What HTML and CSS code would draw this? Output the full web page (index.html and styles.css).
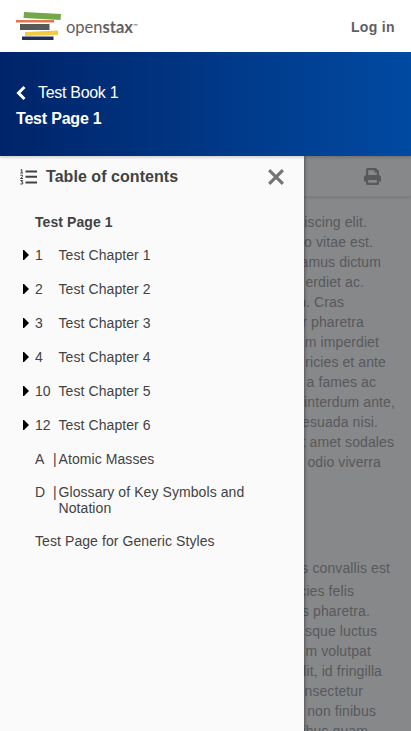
FILE: index.html
```
<!DOCTYPE html>
<html lang="en">
<head>
<meta charset="utf-8">
<title>Test Page 1</title>
<link rel="stylesheet" href="styles.css">
</head>
<body>
<header class="nav">
  <div class="logo">
    <svg width="46" height="29" viewBox="0 0 46 29" aria-hidden="true">
      <path fill="#73a84a" d="M8 0 45 2 44.500 8 7.500 6z"/>
      <path fill="#e27450" d="M0 8H38V10.600H0z"/>
      <path fill="#555a59" d="M4 12H33.500V18H4z"/>
      <path fill="#f2cb43" d="M9 20 42 18.500V23L9 24z"/>
      <path fill="#242c58" d="M6 24.500H37.500V28H6z"/>
    </svg>
    <span class="wordmark">open<b>stax</b><small>™</small></span>
  </div>
  <a class="login">Log in</a>
</header>
<section class="bookbar">
  <a class="book"><svg width="10" height="16" viewBox="0 0 10 16"><path d="M8.500 2 2.500 8 8.500 14" fill="none" stroke="#fff" stroke-width="3"/></svg><span>Test Book 1</span></a>
  <h1>Test Page 1</h1>
</section>
<main class="stage">
  <aside class="drawer">
    <div class="drawer-head">
      <svg class="list" width="18" height="16" viewBox="0 0 18 16"><path d="M5.500 2.500H17M5.500 7.800H17M5.500 13.500H17" stroke="#424242" stroke-width="2"/><path d="M.5 1.200 1.800.5V4M.3 4H3M.4 6.200H2.500V7.500L.5 9.500H3M.4 11.500H2.700L1.500 13H2.700V15H.3" fill="none" stroke="#424242"/></svg>
      <h2>Table of contents</h2>
      <svg class="close" width="16" height="16" viewBox="0 0 16 16"><path d="M2.300 2.300 13.700 13.700M13.700 2.300 2.300 13.700" stroke="#757575" stroke-width="3.200" stroke-linecap="square"/></svg>
    </div>
    <ul class="toc">
      <li class="current">Test Page 1</li>
      <li class="chapter"><i></i><span class="num">1</span><span>Test Chapter 1</span></li>
      <li class="chapter"><i></i><span class="num">2</span><span>Test Chapter 2</span></li>
      <li class="chapter"><i></i><span class="num">3</span><span>Test Chapter 3</span></li>
      <li class="chapter"><i></i><span class="num">4</span><span>Test Chapter 4</span></li>
      <li class="chapter"><i></i><span class="num">10</span><span>Test Chapter 5</span></li>
      <li class="chapter"><i></i><span class="num">12</span><span>Test Chapter 6</span></li>
      <li class="appendix"><span class="num">A</span><span class="bar">|</span><span>Atomic Masses</span></li>
      <li class="appendix"><span class="num">D</span><span class="bar">|</span><span>Glossary of Key Symbols and Notation</span></li>
      <li>Test Page for Generic Styles</li>
    </ul>
  </aside>
  <div class="content">
    <div class="toolbar">
      <svg width="17" height="17" viewBox="0 0 17 17"><path fill="#58595b" fill-rule="evenodd" d="M2 1.500Q2 0 3.500 0H12L15 3V7Q17 7.300 17 9V13.500H15V15.500Q15 17 13.500 17H3.500Q2 17 2 15.500V13.500H0V9Q0 7.300 2 7zM4.200 2.200V7H12.800V4.500H10.500V2.200zM4.200 12V14.800H12.800V12z"/></svg>
    </div>
    <div class="prose first">
      <p>iscing elit.</p><p>o vitae est.</p><p>amus dictum</p><p>erdiet ac.</p><p>n. Cras</p><p>r pharetra</p><p>m imperdiet</p><p>ricies et ante</p><p>a fames ac</p><p>interdum ante,</p><p>esuada nisi.</p><p>t amet sodales</p><p>odio viverra</p>
    </div>
    <div class="prose second">
      <p>s convallis est</p><p>cies felis</p><p>s pharetra.</p><p>sque luctus</p><p>m volutpat</p><p>lit, id fringilla</p><p>nsectetur</p><p>non finibus</p><p>ibus quam</p>
    </div>
  </div>
</main>
</body>
</html>
```
FILE: styles.css
```
* { box-sizing: border-box; }
body { margin: 0; height: 731px; overflow: hidden; display: flex; flex-direction: column; font-family: "Liberation Sans", Arial, sans-serif; color: #424242; background: #fff; }
h1, h2, p, ul { margin: 0; padding: 0; }
svg { display: block; flex: none; }
.nav { height: 52px; flex: none; display: flex; justify-content: space-between; padding: 12px 16px 0; }
.logo { display: flex; gap: 4px; }
.wordmark { font: 16.500px/27px Lato, sans-serif; color: #5f6062; }
.wordmark small { font-size: 6px; vertical-align: 5px; }
.login { font-size: 14px; font-weight: bold; line-height: 31px; letter-spacing: .35px; color: #5f6062; }
.bookbar { height: 104px; flex: none; padding: 31px 16px 0; color: #fff; background: linear-gradient(to right, #002469, #004aa2); position: relative; z-index: 2; box-shadow: 0 2px 2px rgba(0,0,0,.14); }
.book { display: flex; align-items: center; gap: 12px; height: 20px; font-size: 16px; letter-spacing: -.3px; }
.bookbar h1 { font-size: 16px; line-height: 20px; margin-top: 6px; letter-spacing: -.2px; }
.stage { flex: 1; min-height: 0; display: flex; }
.drawer { width: 304px; flex: none; background: #fafafa; z-index: 1; box-shadow: 1px 0 3px rgba(0,0,0,.4); }
.drawer-head { height: 41px; display: flex; align-items: center; padding: 0 20px 0 20px; }
.drawer-head h2 { font-size: 16px; line-height: 20px; margin-left: 8px; padding-top: 1px; flex: 1; letter-spacing: .05px; }
.toc { list-style: none; padding: 17px 40px 0 35px; font-size: 14px; line-height: 16px; letter-spacing: .08px; }
.toc li { display: flex; margin-bottom: 17px; }
.toc .current { font-weight: bold; }
.toc .chapter { margin: 0 0 18px -12px; }
.toc .appendix { margin-right: -10px; }
.chapter i { width: 6px; height: 10px; margin: 3px 6px 0 0; background: #000; clip-path: polygon(0 0, 17% 0, 100% 50%, 17% 100%, 0 100%); }
.num { width: 23.500px; flex: none; }
.appendix .num { width: 18px; }
.bar { width: 5.500px; flex: none; }
.content { flex: 1; min-width: 0; overflow: hidden; background: #87888a; }
.toolbar { height: 41px; padding: 12px 30px 0 0; display: flex; justify-content: flex-end; border-bottom: 1px solid #7d7e80; box-shadow: 0 1px 2px rgba(0,0,0,.12); }
.prose { display: flex; flex-direction: column; align-items: flex-end; color: #58595b; font-size: 14px; line-height: 20px; letter-spacing: .1px; }
.prose p { white-space: nowrap; }
.first { padding-top: 15px; }
.second { padding-top: 86px; }
.second p:first-child { margin-bottom: 3px; }
.first p:nth-child(1) { margin-right: 44px; }
.first p:nth-child(2) { margin-right: 38px; }
.first p:nth-child(3) { margin-right: 30px; }
.first p:nth-child(4) { margin-right: 47px; }
.first p:nth-child(5) { margin-right: 67px; }
.first p:nth-child(6) { margin-right: 47px; }
.first p:nth-child(7) { margin-right: 32px; }
.first p:nth-child(8) { margin-right: 25px; }
.first p:nth-child(9) { margin-right: 35px; }
.first p:nth-child(10) { margin-right: 16px; }
.first p:nth-child(11) { margin-right: 33px; }
.first p:nth-child(12) { margin-right: 17px; }
.first p:nth-child(13) { margin-right: 30px; }
.second p:nth-child(1) { margin-right: 21px; }
.second p:nth-child(2) { margin-right: 57px; }
.second p:nth-child(3) { margin-right: 41px; }
.second p:nth-child(4) { margin-right: 34px; }
.second p:nth-child(5) { margin-right: 40px; }
.second p:nth-child(6) { margin-right: 29px; }
.second p:nth-child(7) { margin-right: 48px; }
.second p:nth-child(8) { margin-right: 35px; }
.second p:nth-child(9) { margin-right: 43px; }
```
